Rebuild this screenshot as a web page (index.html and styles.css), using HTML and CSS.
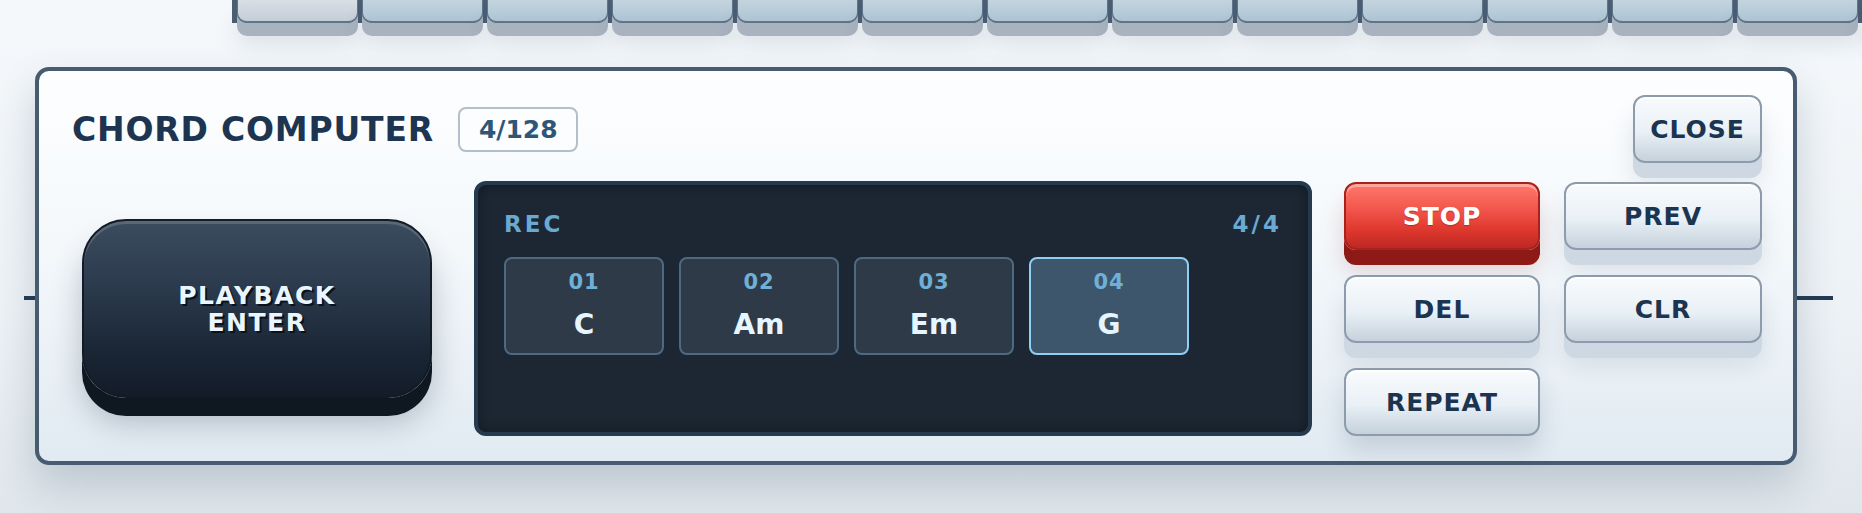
FILE: index.html
```html
<!DOCTYPE html>
<html lang="en">
    <head>
        <title>Chord Computer</title>
        <meta charset="utf-8">
        <meta name="viewport" content="width=device-width, initial-scale=1">
        <link rel="stylesheet" href="styles.css">
    </head>
    <body>
        <!-- keyboard behind the dialog -->
        <div class="keys">
            <div class="key key-lit"></div>
            <div class="key"></div>
            <div class="key"></div>
            <div class="key"></div>
            <div class="key"></div>
            <div class="key"></div>
            <div class="key"></div>
            <div class="key"></div>
            <div class="key"></div>
            <div class="key"></div>
            <div class="key"></div>
            <div class="key"></div>
            <div class="key"></div>
            <div class="key"></div>
        </div>

        <div class="panel" id="chordComputer">
            <div class="panel-head">
                <h2 class="panel-title">CHORD COMPUTER</h2>
                <span class="badge">4/128</span>
                <button class="btn btn-light btn-close">CLOSE</button>
            </div>
            <div class="panel-body">
                <button class="btn-playback">PLAYBACK<br>ENTER</button>

                <div class="screen">
                    <div class="screen-head">
                        <span>REC</span>
                        <span>4/4</span>
                    </div>
                    <div class="chords">
                        <div class="chord">
                            <span class="chord-num">01</span>
                            <span class="chord-name">C</span>
                        </div>
                        <div class="chord">
                            <span class="chord-num">02</span>
                            <span class="chord-name">Am</span>
                        </div>
                        <div class="chord">
                            <span class="chord-num">03</span>
                            <span class="chord-name">Em</span>
                        </div>
                        <div class="chord chord-active">
                            <span class="chord-num">04</span>
                            <span class="chord-name">G</span>
                        </div>
                    </div>
                </div>

                <div class="controls">
                    <button class="btn btn-stop">STOP</button>
                    <button class="btn btn-light">PREV</button>
                    <button class="btn btn-light">DEL</button>
                    <button class="btn btn-light">CLR</button>
                    <button class="btn btn-light btn-flat">REPEAT</button>
                </div>
            </div>
        </div>
    </body>
</html>
```

FILE: styles.css
```css
html, body{
margin: 0;
height: 100%;
overflow: hidden;
}
body{
background: linear-gradient(180deg, #f5f8fb 0%, #edf2f6 60%, #dfe6ec 100%);
font-family: "DejaVu Sans", sans-serif;
font-weight: bold;
}
button{
font-family: inherit;
font-weight: bold;
cursor: pointer;
}

/* keyboard strip peeking out at the top */
.keys{
display: flex;
gap: 4px;
height: 23px;
margin-left: 232px;
padding-left: 5px;
background: #4a5e74;
}
.key{
flex: 0 0 121px;
height: 23px;
box-sizing: border-box;
border: 1px solid #60758a;
border-top: none;
border-bottom-width: 2px;
border-radius: 0 0 10px 10px;
background: linear-gradient(180deg, #c3d4df 0%, #aec4d3 100%);
box-shadow: 0 13px 0 #a8b3bf, 0 20px 22px rgba(60, 80, 105, 0.14);
}
.key-lit{
background: linear-gradient(180deg, #d8dfe5 0%, #c4ced7 100%);
}

/* dialog */
.panel{
position: relative;
box-sizing: border-box;
width: 1762px;
height: 398px;
margin: 44px 0 0 35px;
padding: 24px 31px 0 33px;
border: 4px solid #475b71;
border-radius: 14px;
background: linear-gradient(180deg, #fdfeff 0%, #f4f8fb 45%, #e1eaf2 100%);
box-shadow: 0 20px 40px rgba(40, 60, 85, 0.2), inset 0 2px 0 #ffffff;
}
.panel::before,
.panel::after{
content: "";
position: absolute;
top: 225px;
height: 4px;
background: #233a52;
}
.panel::before{
left: -15px;
width: 11px;
}
.panel::after{
right: -40px;
width: 36px;
}

.panel-head{
display: flex;
align-items: center;
height: 68px;
}
.panel-title{
margin: 0 24px 0 0;
font-size: 33px;
letter-spacing: 0.8px;
color: #1d3550;
}
.badge{
box-sizing: border-box;
height: 45px;
padding: 0 18px 0 19px;
border: 2px solid #b3bfca;
border-radius: 8px;
background: #fbfdff;
font-size: 25px;
line-height: 41px;
color: #2f5677;
}
.btn-close{
margin-left: auto;
width: 129px;
}

.panel-body{
display: flex;
align-items: flex-start;
margin-top: 18px;
}

/* big dark key */
.btn-playback{
width: 350px;
height: 179px;
margin: 38px 0 0 10px;
border: 2px solid #121b26;
border-radius: 44px;
background: linear-gradient(180deg, #3c4c5f 0%, #2a394b 40%, #1a2635 75%, #131c28 100%);
box-shadow: inset 0 3px 0 rgba(255, 255, 255, 0.16), 0 18px 0 #0f1720, 0 24px 30px rgba(20, 35, 55, 0.25);
font-size: 25px;
line-height: 27px;
letter-spacing: 1.5px;
color: #eaf6ff;
text-shadow: 2px 2px 0 #0b121b;
}

/* recorder screen */
.screen{
box-sizing: border-box;
width: 838px;
height: 255px;
margin-left: 42px;
padding: 26px 26px;
border: 4px solid #25394f;
border-radius: 12px;
background: #1c2733;
box-shadow: inset 0 0 14px rgba(0, 0, 0, 0.35);
}
.screen-head{
display: flex;
justify-content: space-between;
font-size: 23px;
line-height: 26px;
letter-spacing: 3px;
color: #6aaad2;
}
.chords{
display: flex;
gap: 15px;
margin-top: 20px;
}
.chord{
box-sizing: border-box;
display: flex;
flex-direction: column;
align-items: center;
gap: 16px;
width: 160px;
height: 98px;
padding-top: 12px;
border: 2px solid #4d6a80;
border-radius: 8px;
background: #2e3a48;
}
.chord-active{
border-color: #8fd0f2;
background: #3d566c;
}
.chord-num{
font-size: 21px;
line-height: 22px;
letter-spacing: 1px;
color: #6fb0d6;
}
.chord-name{
font-size: 28px;
line-height: 32px;
color: #e6f6ff;
}

/* button grid */
.controls{
display: grid;
grid-template-columns: 196px 198px;
grid-auto-rows: 68px;
gap: 25px 24px;
margin: 1px 0 0 32px;
}
.btn{
height: 68px;
padding: 0;
border-radius: 12px;
font-size: 25px;
letter-spacing: 1px;
}
.btn-light{
border: 2px solid #8c9cac;
background: linear-gradient(180deg, #f8fbfd 0%, #e9f0f6 55%, #c5d1dc 100%);
box-shadow: inset 0 2px 0 #ffffff, 0 15px 0 #cdd8e2, 0 20px 24px rgba(40, 60, 85, 0.12);
color: #1b3550;
}
.btn-flat{
box-shadow: inset 0 2px 0 #ffffff, 0 14px 24px rgba(40, 60, 85, 0.16);
}
.btn-stop{
border: 2px solid #a8221d;
background: linear-gradient(180deg, #ff786d 0%, #f45a50 35%, #e0392f 70%, #bd2822 100%);
box-shadow: inset 0 3px 0 rgba(255, 190, 180, 0.7), 0 15px 0 #8e1a17, 0 20px 24px rgba(120, 30, 25, 0.18);
color: #ffffff;
text-shadow: 0 1px 1px rgba(90, 10, 10, 0.35);
}
```
